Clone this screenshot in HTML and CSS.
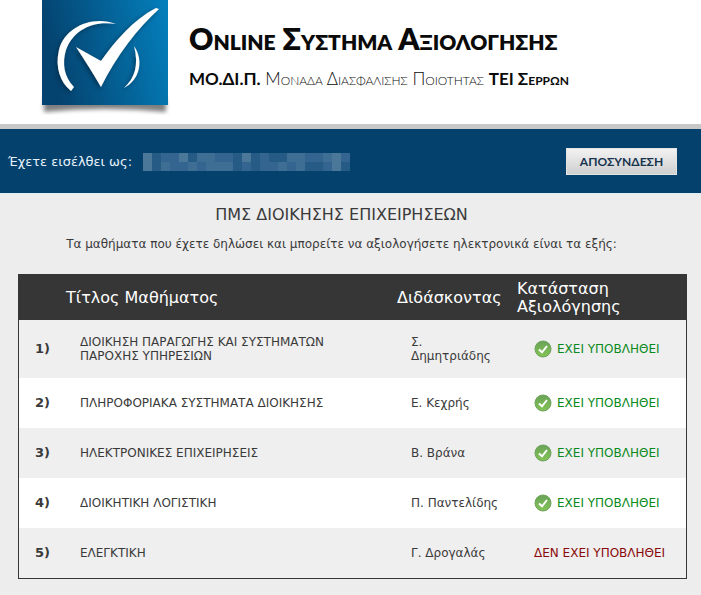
FILE: index.html
```html
<!DOCTYPE html>
<html lang="el">
<head>
  <meta charset="UTF-8" />
  <title>Online Σύστημα Αξιολόγησης</title>
  <link rel="stylesheet" href="styles.css">
</head>
<body>
  <header class="header">
    <svg class="logo" width="150" height="124" viewBox="0 0 150 124" role="img" aria-label="ΜΟ.ΔΙ.Π.">
      <defs>
        <linearGradient id="logoBg" x1="0" y1="0.2" x2="1" y2="0">
          <stop offset="0" stop-color="#04436f" />
          <stop offset="1" stop-color="#0480bd" />
        </linearGradient>
        <filter id="soft" x="-20%" y="-20%" width="140%" height="140%"><feGaussianBlur stdDeviation="2" /></filter>
        <filter id="drop" x="-20%" y="-20%" width="140%" height="140%">
          <feDropShadow dx="-2" dy="2" stdDeviation="2" flood-color="#022c4c" flood-opacity="0.8" />
        </filter>
      </defs>
      <path d="M14 98 H136 L136 112 Q75 106 14 112 Z" fill="#555" opacity="0.75" filter="url(#soft)" />
      <rect x="12" y="0" width="126" height="105" fill="url(#logoBg)" />
      <g fill="#fff" filter="url(#drop)">
        <path d="M86 24 C64 15 35 26 29 50 C25 67 30 82 41 91 L44 87 C34 77 32 63 36 50 C43 30 63 20 86 24 Z" />
        <path d="M104 46 C114 60 110 80 94 88 C105 78 109 65 104 46 Z" />
        <path d="M46 47 L71 61 C86 40 103 20 126 8 L129 9 C108 28 86 56 71 87 Q60 68 46 47 Z" />
      </g>
    </svg>
    <div class="titles">
      <h1>Online Συστημα Αξιολογησης</h1>
      <p><b>ΜΟ.ΔΙ.Π.</b> Μοναδα Διασφαλισης Ποιοτητας <b>ΤΕΙ Σερρων</b></p>
    </div>
  </header>

  <div class="userbar">
    <span>Έχετε εισέλθει ως:</span>
    <svg class="username" width="207" height="18" viewBox="0 0 207 18" shape-rendering="crispEdges" aria-hidden="true">
      <rect width="207" height="18" fill="#336590" />
      <path fill="#4b7799" d="M0 0h9v18h-9z M36 0h9v9h-9z M99 0h9v9h-9z M189 0h9v18h-9z" />
      <path fill="#3f6e95" d="M18 9h9v9h-9z M45 9h9v9h-9z M54 0h18v9h-18z M63 9h18v9h-18z M81 9h9v9h-9z M135 9h9v9h-9z M144 0h18v9h-18z M153 9h9v9h-9z M180 0h9v9h-9z" />
      <path fill="#265b85" d="M9 0h9v18h-9z M45 0h9v9h-9z M90 0h9v18h-9z M108 0h9v18h-9z M126 0h18v9h-18z M162 9h18v9h-18z M198 9h9v9h-9z" />
    </svg>
    <button type="button" class="logout">ΑΠΟΣΥΝΔΕΣΗ</button>
  </div>

  <main class="content">
    <div class="heading">
      <h2>ΠΜΣ ΔΙΟΙΚΗΣΗΣ ΕΠΙΧΕΙΡΗΣΕΩΝ</h2>
      <p>Τα μαθήματα που έχετε δηλώσει και μπορείτε να αξιολογήσετε ηλεκτρονικά είναι τα εξής:</p>
    </div>

    <svg width="0" height="0" class="sprite" aria-hidden="true">
      <linearGradient id="okBg" x1="0" y1="0" x2="0" y2="1">
        <stop offset="0" stop-color="#68a357" />
        <stop offset="1" stop-color="#84c455" />
      </linearGradient>
      <symbol id="ok" viewBox="0 0 18 18">
        <circle cx="9" cy="9" r="8" fill="url(#okBg)" stroke="#6fa35c" stroke-width="1" />
        <path d="M5 9.5 L8 12.3 L13 6" fill="none" stroke="#fff" stroke-width="2" />
      </symbol>
    </svg>

    <table class="courses">
      <colgroup>
        <col class="col-num"><col><col class="col-teacher"><col class="col-status">
      </colgroup>
      <thead>
        <tr>
          <th></th>
          <th>Τίτλος Μαθήματος</th>
          <th>Διδάσκοντας</th>
          <th>Κατάσταση Αξιολόγησης</th>
        </tr>
      </thead>
      <tbody>
        <tr>
          <td class="num">1)</td>
          <td class="name">ΔΙΟΙΚΗΣΗ ΠΑΡΑΓΩΓΗΣ ΚΑΙ ΣΥΣΤΗΜΑΤΩΝ ΠΑΡΟΧΗΣ ΥΠΗΡΕΣΙΩΝ</td>
          <td>Σ. Δημητριάδης</td>
          <td><span class="status done"><svg width="18" height="18"><use href="#ok" /></svg>ΕΧΕΙ ΥΠΟΒΛΗΘΕΙ</span></td>
        </tr>
        <tr>
          <td class="num">2)</td>
          <td class="name">ΠΛΗΡΟΦΟΡΙΑΚΑ ΣΥΣΤΗΜΑΤΑ ΔΙΟΙΚΗΣΗΣ</td>
          <td>Ε. Κεχρής</td>
          <td><span class="status done"><svg width="18" height="18"><use href="#ok" /></svg>ΕΧΕΙ ΥΠΟΒΛΗΘΕΙ</span></td>
        </tr>
        <tr>
          <td class="num">3)</td>
          <td class="name">ΗΛΕΚΤΡΟΝΙΚΕΣ ΕΠΙΧΕΙΡΗΣΕΙΣ</td>
          <td>Β. Βράνα</td>
          <td><span class="status done"><svg width="18" height="18"><use href="#ok" /></svg>ΕΧΕΙ ΥΠΟΒΛΗΘΕΙ</span></td>
        </tr>
        <tr>
          <td class="num">4)</td>
          <td class="name">ΔΙΟΙΚΗΤΙΚΗ ΛΟΓΙΣΤΙΚΗ</td>
          <td>Π. Παντελίδης</td>
          <td><span class="status done"><svg width="18" height="18"><use href="#ok" /></svg>ΕΧΕΙ ΥΠΟΒΛΗΘΕΙ</span></td>
        </tr>
        <tr>
          <td class="num">5)</td>
          <td class="name">ΕΛΕΓΚΤΙΚΗ</td>
          <td>Γ. Δρογαλάς</td>
          <td><span class="status missing">ΔΕΝ ΕΧΕΙ ΥΠΟΒΛΗΘΕΙ</span></td>
        </tr>
      </tbody>
    </table>
  </main>
</body>
</html>
```
FILE: styles.css
```css
* {
  box-sizing: border-box;
}
body {
  margin: 0;
  background: #ededed;
  color: #3a3a3a;
  font-family: Verdana, "DejaVu Sans", sans-serif;
  font-size: 12px;
}
.header {
  display: flex;
  align-items: flex-start;
  gap: 9px;
  padding-left: 30px;
  background: #fff;
}
.logo {
  display: block;
  flex: none;
}
.titles {
  padding-top: 18px;
  color: #0a0a0a;
  font-family: Lato, sans-serif;
  font-variant: small-caps;
  white-space: nowrap;
}
.titles h1 {
  margin: 0;
  font-size: 30px;
  font-weight: 800;
  line-height: 40px;
}
.titles p {
  margin: 11px 0 0;
  font-size: 17px;
  font-weight: 300;
  line-height: 20px;
}
.titles b {
  font-weight: 700;
}

/* Barra de usuario */
.userbar {
  display: flex;
  align-items: center;
  gap: 11px;
  padding: 19px 24px 18px 8px;
  border-top: 5px solid #c8c8c8;
  background: #04416d;
  color: #e6f2fa;
  font-size: 13px;
}
.logout {
  margin-left: auto;
  width: 111px;
  height: 27px;
  padding: 0;
  border: 1px solid #e4e4e4;
  background: linear-gradient(#f2f2f2, #cfcfcf);
  color: #17344f;
  font-family: Lato, sans-serif;
  font-size: 12px;
  font-weight: 700;
  cursor: pointer;
}

.content {
  padding: 12px 14px 16px 18px;
  border-top: 1px solid #e2ecf4;
}
.heading {
  padding-right: 22px;
  text-align: center;
}
.heading h2 {
  margin: 0;
  font-size: 16px;
  font-weight: 400;
  line-height: 18px;
}
.heading p {
  margin: 12px 0 22px;
  line-height: 16px;
}
.sprite {
  position: absolute;
}

/* Tabla */
.courses {
  width: 100%;
  table-layout: fixed;
  border-collapse: separate;
  border-spacing: 0;
  border: 1px solid #363636;
  background: #fff;
}
.col-num {
  width: 43px;
}
.col-teacher {
  width: 120px;
}
.col-status {
  width: 173px;
}
.courses th {
  height: 45px;
  padding: 0 4px;
  background: #363636;
  color: #fff;
  font-size: 16px;
  font-weight: 400;
  line-height: 18px;
  text-align: left;
}
.courses td {
  height: 50px;
  padding: 15px 12px 15px 18px;
  line-height: 14px;
}
.courses tbody tr:nth-child(odd) {
  background: #efefef;
}
.courses .num {
  padding: 0 0 0 16px;
  font-size: 13px;
  font-weight: 700;
}
.courses .name {
  padding-right: 50px;
}
.status {
  display: flex;
  align-items: center;
  gap: 5px;
  padding-left: 3px;
  white-space: nowrap;
}
.done {
  color: #0a8a1c;
}
.missing {
  color: #8a0a0a;
}
```
